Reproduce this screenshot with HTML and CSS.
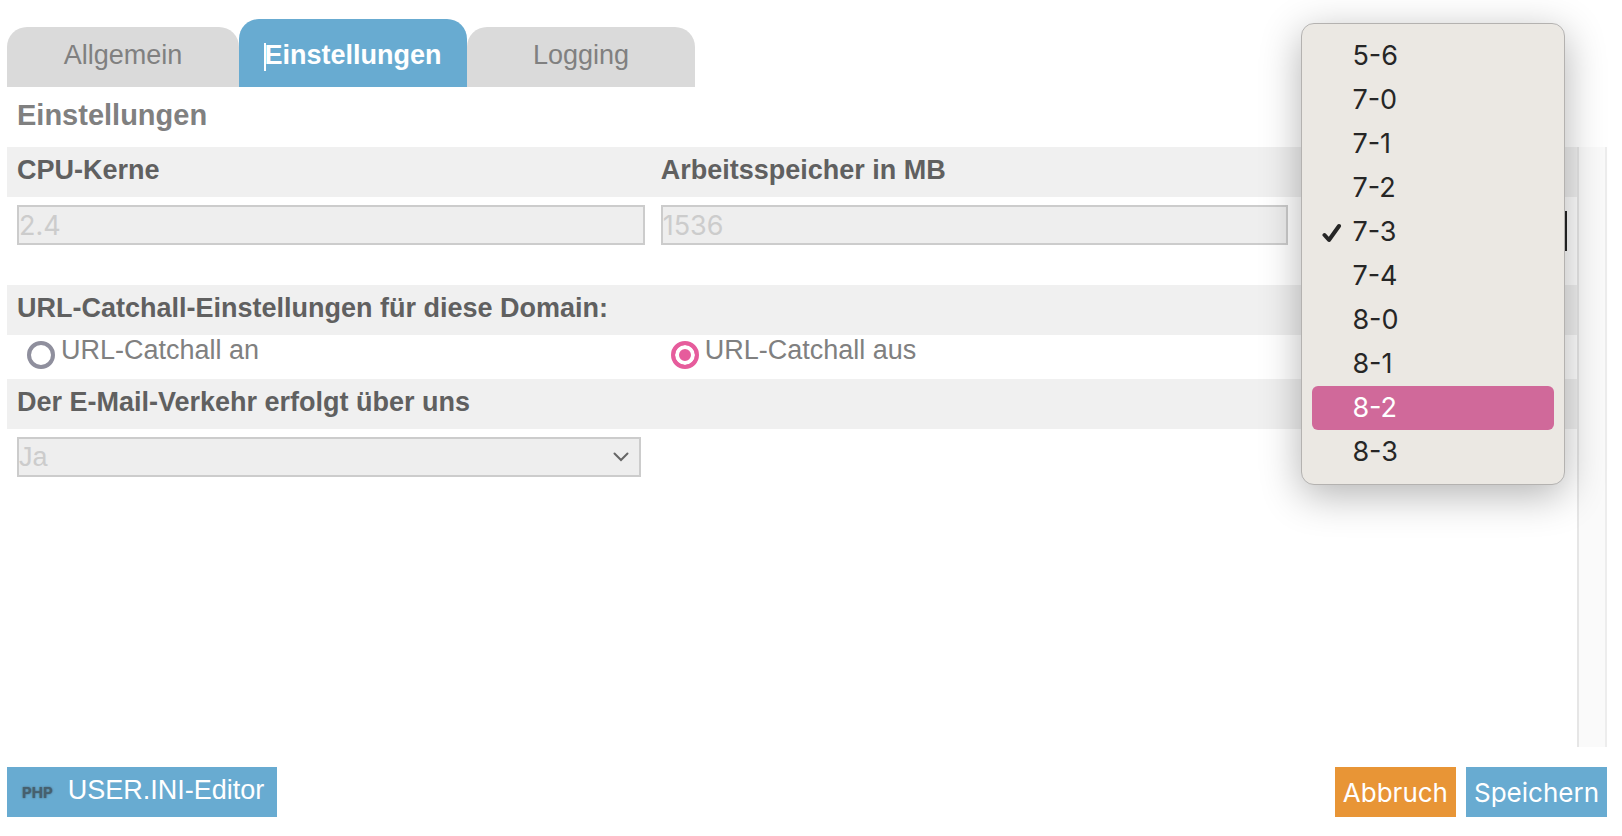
FILE: index.html
```
<!DOCTYPE html>
<html lang="de">
<head>
    <meta charset="UTF-8">
    <meta name="viewport" content="width=device-width, initial-scale=1.0">
    <title>Einstellungen</title>
    <link rel="stylesheet" href="styles.css">
</head>
<body>
    <nav class="tabs">
        <a href="#allgemein" class="tab tab-first">Allgemein</a>
        <a href="#einstellungen" class="tab active"><span class="caret">Einstellungen</span></a>
        <a href="#logging" class="tab">Logging</a>
    </nav>

    <form class="form">
        <h1 class="title">Einstellungen</h1>
        <div class="panel">
            <div class="content">
                <div class="row head">
                    <label class="cell" for="cpu">CPU-Kerne</label>
                    <label class="cell" for="ram">Arbeitsspeicher in MB</label>
                </div>
                <div class="row fields">
                    <div class="cell wide"><input type="text" class="field" id="cpu" value="2.4" disabled></div>
                    <div class="cell wide"><input type="text" class="field" id="ram" value="1536" disabled></div>
                    <div class="cell version">
                        <select class="field open" aria-label="PHP-Version">
                            <option>7-3</option>
                        </select>
                        <ul class="menu" role="listbox" aria-label="PHP-Version">
                            <li class="item" role="option">5-6</li>
                            <li class="item" role="option">7-0</li>
                            <li class="item" role="option">7-1</li>
                            <li class="item" role="option">7-2</li>
                            <li class="item" role="option" aria-selected="true">
                                <svg class="check" viewBox="0 0 20 20"><path d="M2.5 12 L7 17 L17 3"/></svg>7-3
                            </li>
                            <li class="item" role="option">7-4</li>
                            <li class="item" role="option">8-0</li>
                            <li class="item" role="option">8-1</li>
                            <li class="item hover" role="option">8-2</li>
                            <li class="item" role="option">8-3</li>
                        </ul>
                    </div>
                </div>

                <div class="head">
                    <div class="cell">URL-Catchall-Einstellungen für diese Domain:</div>
                </div>
                <div class="row radios">
                    <div class="cell choice">
                        <input type="radio" class="radio" name="catchall" id="catchall-an">
                        <label for="catchall-an">URL-Catchall an</label>
                    </div>
                    <div class="cell choice">
                        <input type="radio" class="radio" name="catchall" id="catchall-aus" checked>
                        <label for="catchall-aus">URL-Catchall aus</label>
                    </div>
                </div>

                <div class="head">
                    <label class="cell" for="mail">Der E-Mail-Verkehr erfolgt über uns</label>
                </div>
                <div class="row fields">
                    <div class="cell select">
                        <select class="field" id="mail" disabled>
                            <option>Ja</option>
                        </select>
                        <svg class="arrow" viewBox="0 0 16 10"><path d="M1.5 1.5 L8 8 L14.5 1.5"/></svg>
                    </div>
                </div>
            </div>
            <div class="track"></div>
        </div>

        <div class="footer">
            <button type="button" class="btn editor"><span class="php">PHP</span>USER.INI-Editor</button>
            <button type="button" class="btn cancel">Abbruch</button>
            <button type="submit" class="btn">Speichern</button>
        </div>
    </form>
</body>
</html>
```

FILE: styles.css
```
*{
    margin: 0;
    padding: 0;
    box-sizing: border-box;
}
body{
    display: flex;
    flex-direction: column;
    min-height: 100vh;
    padding: 19px 15px 19px 7px;
    font-family: "Liberation Sans", Arial, Helvetica, sans-serif;
    font-size: 27px;
    color: #808080;
    background-color: #fff;
}

/* tabs */
.tabs{
    display: flex;
    align-items: flex-end;
}
.tab{
    min-width: 228px;
    padding-bottom: 4px;
    line-height: 56px;
    text-align: center;
    text-decoration: none;
    color: #808080;
    background-color: #dadada;
    border-radius: 20px 20px 0 0;
}
.tab-first{
    min-width: 232px;
}
.tab.active{
    padding-top: 8px;
    font-weight: bold;
    color: white;
    background-color: #68abd1;
}
.caret{
    position: relative;
}
.caret::before{
    content: "";
    position: absolute;
    left: 0;
    top: 3px;
    width: 2px;
    height: 28px;
    background-color: white;
}

/* form */
.form{
    display: flex;
    flex-direction: column;
    flex: 1;
}
.title{
    padding: 0 10px 4px;
    font-size: 29px;
    line-height: 56px;
}
.panel{
    display: flex;
    flex: 1;
}
.content{
    flex: 1;
}
.track{
    width: 30px;
    background-color: #fafafa;
    border-left: 2px solid #e6e6e6;
    border-right: 2px solid #ededed;
}
.row{
    display: grid;
    grid-template-columns: 41% 41% 18%;
}
.cell{
    padding: 0 10px;
}
.head{
    padding-bottom: 4px;
    line-height: 46px;
    font-weight: bold;
    color: #606060;
    background-color: #f0f0f0;
}
.fields{
    height: 88px;
    padding-top: 8px;
}
.wide{
    padding-right: 6px;
}
.field{
    display: block;
    width: 100%;
    height: 40px;
    appearance: none;
    border: 2px solid #ccc;
    border-radius: 0;
    background-color: #eee;
    font-family: Inter, sans-serif;
    font-size: 27px;
    color: #ccc;
    opacity: 1;
}
select.field{
    font-family: "Liberation Sans", Arial, sans-serif;
}
.select{
    position: relative;
}
.arrow{
    position: absolute;
    right: 22px;
    top: 15px;
    width: 16px;
    height: 10px;
    fill: none;
    stroke: #666;
    stroke-width: 2;
    stroke-linecap: round;
}
.radios{
    height: 44px;
    line-height: 30px;
}
.choice{
    display: flex;
    align-items: flex-start;
    gap: 6px;
    padding-left: 20px;
}
.radio{
    width: 28px;
    height: 28px;
    margin-top: 6px;
    appearance: none;
    border: 4px solid #8f8f9d;
    border-radius: 50%;
    background-color: white;
}
.radio:checked{
    border-color: #e65c9c;
    background-color: #e65c9c;
    box-shadow: inset 0 0 0 4px white;
}

/* version list */
.version{
    position: relative;
    padding-top: 6px;
}
.version .open{
    border-color: #262626;
    background-color: white;
    color: #262626;
}
.menu{
    position: absolute;
    z-index: 1;
    top: -182px;
    left: 7px;
    right: 12px;
    padding: 10px;
    list-style: none;
    border: 1px solid #b4b2b0;
    border-radius: 13px;
    background-color: #ebe8e3;
    background-clip: padding-box;
    box-shadow: 0 10px 40px rgba(0, 0, 0, 0.3);
    font-family: Inter, sans-serif;
    font-size: 27px;
    line-height: 44px;
    color: #262626;
}
.item{
    position: relative;
    padding-left: 40px;
    border-radius: 6px;
}
.item.hover{
    color: white;
    background-color: #d0699a;
}
.check{
    position: absolute;
    left: 10px;
    top: 13px;
    width: 20px;
    height: 20px;
    fill: none;
    stroke: #262626;
    stroke-width: 4;
    stroke-linecap: round;
    stroke-linejoin: round;
}

/* buttons */
.footer{
    display: flex;
    gap: 10px;
    margin-top: 20px;
}
.btn{
    height: 50px;
    padding: 0 8px;
    border: none;
    cursor: pointer;
    font-family: Inter, sans-serif;
    font-size: 26px;
    color: white;
    background-color: #68abd1;
}
.cancel{
    background-color: #e89536;
}
.editor{
    display: flex;
    align-items: center;
    gap: 15px;
    margin-right: auto;
    padding: 0 13px 4px 15px;
    font-family: "Liberation Sans", Arial, sans-serif;
    font-size: 27px;
}
.php{
    padding-top: 4px;
    font-family: Inter, sans-serif;
    font-size: 15px;
    font-weight: bold;
    color: #46606e;
    text-shadow: 0 0 2px #46606e;
}
```
